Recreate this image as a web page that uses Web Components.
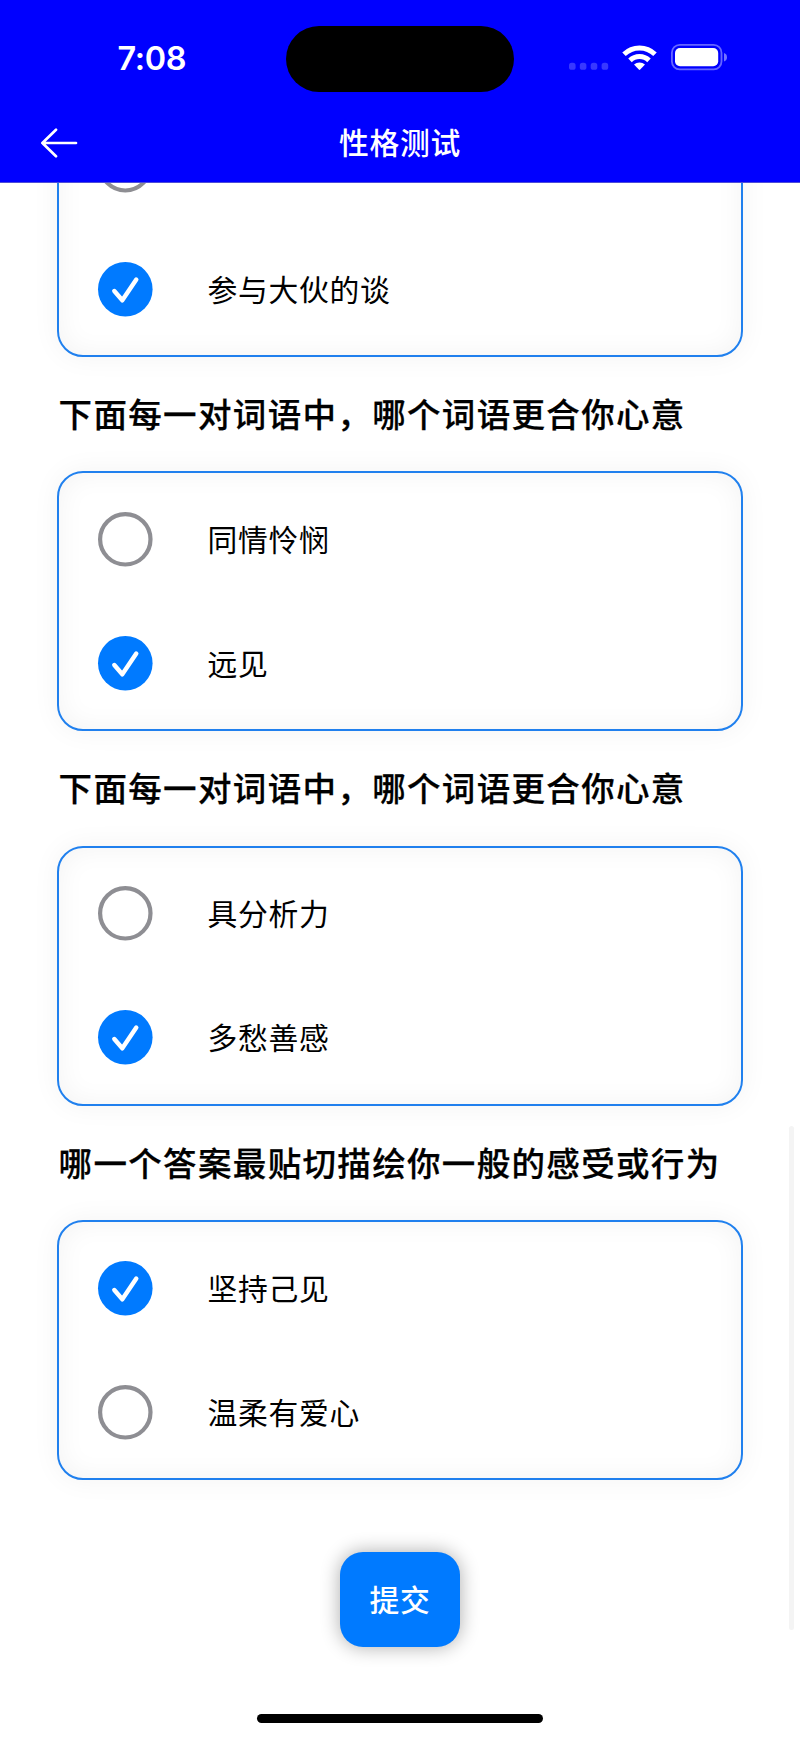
<!DOCTYPE html>
<html lang="zh-CN">
<head>
<meta charset="utf-8">
<title>性格测试</title>
<style>
  html, body {
    margin: 0;
    height: 100%;
    background: #fff;
    overflow: hidden;
    font-family: "Noto Sans CJK SC", sans-serif;
  }
</style>
</head>
<body>
<quiz-screen>
  <status-bar slot="top" time="7:08"></status-bar>
  <nav-bar slot="top">性格测试</nav-bar>

  <question-block class="first">
    <option-item></option-item>
    <option-item checked>参与大伙的谈</option-item>
  </question-block>
  <question-block heading="下面每一对词语中，哪个词语更合你心意">
    <option-item>同情怜悯</option-item>
    <option-item checked>远见</option-item>
  </question-block>
  <question-block heading="下面每一对词语中，哪个词语更合你心意">
    <option-item>具分析力</option-item>
    <option-item checked>多愁善感</option-item>
  </question-block>
  <question-block heading="哪一个答案最贴切描绘你一般的感受或行为">
    <option-item checked>坚持己见</option-item>
    <option-item>温柔有爱心</option-item>
  </question-block>
  <submit-button>提交</submit-button>
</quiz-screen>

<script>
function createTemplate(html) {
  const templateElement = document.createElement("template");
  templateElement.innerHTML = html;
  return templateElement;
}

/* status-bar: hora, isla, señal, wifi y batería. atributo: time */
const statusBarTemplate = createTemplate(`
<style>
  :host {
    display: grid;
    grid-template-columns: 1fr 228px 1fr;
    align-items: center;
    height: 66px;
    padding-top: 25.5px;
    color: #fff;
  }
  .time {
    font: 600 32.4px/40px Inter, sans-serif;
    padding: 1px 0 0 117.5px;
    letter-spacing: -0.3px;
  }
  .island { height: 66px; border-radius: 33px; background: #000; }
  svg { display: block; margin: 0 0 3px 53.5px; }
</style>
<div class="time"></div>
<div class="island"></div>
<svg width="160" height="28" viewBox="567 43 160 28">
  <g fill="#fff" fill-opacity=".22">
    <rect x="568" y="62.8" width="6.6" height="7" rx="2.6"/>
    <rect x="578.8" y="62.8" width="6.6" height="7" rx="2.6"/>
    <rect x="589.7" y="62.8" width="6.6" height="7" rx="2.6"/>
    <rect x="600.6" y="62.8" width="6.6" height="7" rx="2.6"/>
  </g>
  <g fill="none" stroke="#fff" stroke-width="5">
    <path d="M623 54.2 A22.2 22.2 0 0 1 654 54.2"/>
    <path d="M629 60.4 A13.6 13.6 0 0 1 648 60.4"/>
  </g>
  <path fill="#fff" d="M633 64.6 A8.2 8.2 0 0 1 644 64.6 L639.2 69.6 Q638.5 70.2 637.8 69.6 Z"/>
  <rect x="670.9" y="44.9" width="49.6" height="24.4" rx="7.8" fill="none" stroke="#fff" stroke-opacity=".4" stroke-width="1.8"/>
  <rect x="674" y="48" width="43.2" height="18.2" rx="5" fill="#fff"/>
  <path d="M723 53 Q726 54 726 57.2 T723 61.4 Z" fill="#fff" fill-opacity=".45"/>
</svg>
`);

class StatusBar extends HTMLElement {
  constructor() {
    super();
    this.attachShadow({ mode: "open" });
  }

  connectedCallback() {
    this.shadowRoot.appendChild(statusBarTemplate.content.cloneNode(true));
    this.shadowRoot.querySelector(".time").textContent = this.getAttribute("time");
  }
}

/* nav-bar: flecha para volver y título centrado */
const navBarTemplate = createTemplate(`
<style>
  :host {
    display: grid;
    grid-template-columns: 1fr auto 1fr;
    align-items: center;
    height: 91px;
    box-sizing: border-box;
    padding: 8px 40px 0;
    color: #fff;
    border-bottom: 1px solid #4d4dd8;
  }
  svg { display: block; margin-top: 4px; }
  .title {
    font-size: 29.8px;
    line-height: 44px;
    font-weight: 500;
    letter-spacing: 0.7px;
  }
</style>
<svg width="38" height="30" viewBox="0 0 38 30" fill="none" stroke="#fff" stroke-width="2.7" stroke-linecap="round" stroke-linejoin="round">
  <path d="M16 1.8 L2.4 15 L16 28.2 M2.4 15 H36"/>
</svg>
<div class="title"><slot></slot></div>
`);

class NavBar extends HTMLElement {
  constructor() {
    super();
    this.attachShadow({ mode: "open" });
  }

  connectedCallback() {
    this.shadowRoot.appendChild(navBarTemplate.content.cloneNode(true));
  }
}

/* option-item: una respuesta. atributo: checked */
const optionItemTemplate = createTemplate(`
<style>
  :host {
    display: flex;
    align-items: center;
    gap: 54.8px;
    height: 54.6px;
    font-size: 29.8px;
    letter-spacing: 0.7px;
    color: #000;
  }
  svg { display: block; flex: none; overflow: visible; }
  .on { display: none; }
  :host([checked]) .on { display: block; }
  :host([checked]) .off { display: none; }
  .label { line-height: 44px; padding-bottom: 2.6px; }
</style>
<svg width="54.6" height="54.6" viewBox="-27.3 -27.3 54.6 54.6">
  <circle class="off" r="25.2" fill="none" stroke="#8e8e93" stroke-width="4.2"/>
  <g class="on">
    <circle r="27.3" fill="#007aff"/>
    <path d="M-11 1.7 L-3 11 L11 -9.8" fill="none" stroke="#fff" stroke-width="4.4" stroke-linecap="round" stroke-linejoin="round"/>
  </g>
</svg>
<div class="label"><slot></slot></div>
`);

class OptionItem extends HTMLElement {
  constructor() {
    super();
    this.attachShadow({ mode: "open" });
  }

  connectedCallback() {
    this.shadowRoot.appendChild(optionItemTemplate.content.cloneNode(true));
  }
}

/* question-block: enunciado y tarjeta con sus respuestas. atributo: heading */
const questionBlockTemplate = createTemplate(`
<style>
  :host { display: block; }
  .heading {
    height: 114.3px;
    line-height: 112px;
    padding-left: 1.3px;
    font-size: 33.5px;
    font-weight: 500;
    letter-spacing: 1.34px;
    white-space: nowrap;
    color: #000;
    -webkit-text-stroke: 0.25px currentColor;
  }
  .heading:empty { display: none; }
  .card {
    display: flex;
    flex-direction: column;
    justify-content: space-between;
    box-sizing: border-box;
    height: 260.1px;
    padding: 38.8px;
    border: 2px solid #2080ee;
    border-radius: 26px;
    box-shadow: 0 0 28px rgba(0, 0, 0, .05), inset 0 0 28px rgba(0, 0, 0, .05);
  }
</style>
<div class="heading"></div>
<div class="card"><slot></slot></div>
`);

class QuestionBlock extends HTMLElement {
  constructor() {
    super();
    this.attachShadow({ mode: "open" });
  }

  connectedCallback() {
    this.shadowRoot.appendChild(questionBlockTemplate.content.cloneNode(true));
    this.shadowRoot.querySelector(".heading").textContent = this.getAttribute("heading") || "";
  }
}

/* submit-button */
const submitButtonTemplate = createTemplate(`
<style>
  :host { display: flex; justify-content: center; padding-top: 72px; }
  button {
    width: 120px;
    height: 95px;
    padding: 0 0 3px;
    border: 0;
    border-radius: 23px;
    background: #007aff;
    color: #fff;
    font: inherit;
    font-size: 29.8px;
    font-weight: 500;
    letter-spacing: 0.7px;
    box-shadow: 0 0 19px rgba(0, 0, 0, .33);
  }
</style>
<button type="button"><slot></slot></button>
`);

class SubmitButton extends HTMLElement {
  constructor() {
    super();
    this.attachShadow({ mode: "open" });
  }

  connectedCallback() {
    this.shadowRoot.appendChild(submitButtonTemplate.content.cloneNode(true));
  }
}

/* quiz-screen: cabecera fija y lista desplazada debajo */
const quizScreenTemplate = createTemplate(`
<style>
  :host {
    display: flex;
    flex-direction: column;
    position: relative;
    height: 1738px;
    overflow: hidden;
  }
  header { flex: none; background: #00f; z-index: 1; }
  main {
    flex: 1;
    min-height: 0;
    overflow: hidden;
    padding: 0 57.3px;
  }
  ::slotted(.first) { margin-top: -85.7px; }
  .scroll-thumb {
    position: absolute;
    right: 6px;
    top: 1126px;
    width: 5px;
    height: 504px;
    border-radius: 3px;
    background: #f4f4f4;
  }
  .home-indicator {
    position: absolute;
    left: 257px;
    bottom: 14.6px;
    width: 286px;
    height: 9.4px;
    border-radius: 5px;
    background: #000;
  }
</style>
<header><slot name="top"></slot></header>
<main><slot></slot></main>
<div class="scroll-thumb"></div>
<div class="home-indicator"></div>
`);

class QuizScreen extends HTMLElement {
  constructor() {
    super();
    this.attachShadow({ mode: "open" });
  }

  connectedCallback() {
    this.shadowRoot.appendChild(quizScreenTemplate.content.cloneNode(true));
  }
}

customElements.define("status-bar", StatusBar);
customElements.define("nav-bar", NavBar);
customElements.define("option-item", OptionItem);
customElements.define("question-block", QuestionBlock);
customElements.define("submit-button", SubmitButton);
customElements.define("quiz-screen", QuizScreen);
</script>
</body>
</html>
